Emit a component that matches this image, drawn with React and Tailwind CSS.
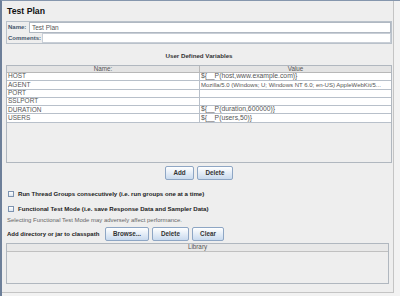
export default function App() {
  const rows = [
    ["HOST", "${__P(host,www.example.com)}"],
    ["AGENT", "Mozilla/5.0 (Windows; U; Windows NT 6.0; en-US) AppleWebKit/5..."],
    ["PORT", ""],
    ["SSLPORT", ""],
    ["DURATION", "${__P(duration,600000)}"],
    ["USERS", "${__P(users,50)}"],
  ];
  const btn =
    "h-[14px] flex items-center justify-center border border-[#8ea6c4] rounded-[2px] bg-gradient-to-b from-[#ffffff] to-[#c9daee] text-[6.3px] font-bold text-[#333]";
  return (
    <div
      className="w-[400px] h-[296px] bg-[#f2f2f2] border-l-2 border-t border-l-[#6d7f99] border-t-[#8596ad] overflow-hidden"
      style={{ fontFamily: '"Liberation Sans", Arial, sans-serif' }}
    >
      <div className="w-[392px] h-[292px] bg-[#eeeeee] border-r border-b border-[#c4c4c4] flex flex-col pl-[4px]">
        <div className="mt-[5px] h-[12px] flex items-center pl-[1px] text-[8.7px] font-bold text-[#111]">
          Test Plan
        </div>
        <div className="mt-[3px] w-[386px] h-[23px] border border-[#b9c1ca] flex flex-col">
          <div className="h-[11px] flex items-center">
            <span className="pl-[1px] w-[22px] text-[6px] font-bold text-[#44556b]">Name:</span>
            <div className="flex-1 h-[11px] bg-white border border-[#b0b8c2] flex items-center pl-[2px] text-[6.5px] text-[#555]">
              Test Plan
            </div>
          </div>
          <div className="h-[11px] flex items-center">
            <span className="pl-[1px] w-[35px] text-[6px] font-bold text-[#44556b] whitespace-nowrap">Comments:</span>
            <div className="flex-1 h-[10px] bg-white border border-[#c8ced6]" />
          </div>
        </div>
        <div className="mt-[8px] h-[8px] w-[386px] flex items-center justify-center text-[6.2px] font-bold text-[#333]">
          User Defined Variables
        </div>
        <div className="mt-[5px] w-[386px] h-[98px] border border-[#b0b7bf] bg-[#eeeeee] flex flex-col">
          <div className="h-[7px] flex bg-[#e4e4e4] border-b border-[#b8b8b8] text-[6.3px] text-[#555] leading-none">
            <div className="w-[193px] border-r border-[#b8b8b8] flex items-center justify-center">Name:</div>
            <div className="flex-1 flex items-center justify-center">Value</div>
          </div>
          {rows.map(([n, v]) => (
            <div key={n} className="h-[8.3px] flex bg-white border-b border-[#b8c0ca] text-[6.5px] text-[#555] leading-none">
              <div className="w-[193px] border-r border-[#b8c0ca] flex items-center pl-[1px]">{n}</div>
              <div
                className={
                  "flex-1 flex items-center pl-[1px] whitespace-nowrap overflow-hidden " +
                  (n === "AGENT" ? "text-[6px]" : "text-[6.8px]")
                }
              >
                {v}
              </div>
            </div>
          ))}
        </div>
        <div className="mt-[3px] w-[386px] flex gap-[3px]">
          <div className={btn + " w-[29px] ml-[159px]"}>Add</div>
          <div className={btn + " w-[36px]"}>Delete</div>
        </div>
        <div className="mt-[10px] h-[8px] flex items-center gap-[4px] pl-[2px]">
          <div className="w-[6px] h-[6px] border border-[#7d93b0] bg-gradient-to-b from-white to-[#dde6f0]" />
          <span className="text-[6.1px] font-bold text-[#222] whitespace-nowrap">
            Run Thread Groups consecutively (i.e. run groups one at a time)
          </span>
        </div>
        <div className="mt-[7px] h-[8px] flex items-center gap-[4px] pl-[2px]">
          <div className="w-[6px] h-[6px] border border-[#7d93b0] bg-gradient-to-b from-white to-[#dde6f0]" />
          <span className="text-[6.1px] font-bold text-[#222] whitespace-nowrap">
            Functional Test Mode (i.e. save Response Data and Sampler Data)
          </span>
        </div>
        <div className="mt-[3px] h-[8px] flex items-center pl-[1px] text-[5.95px] text-[#666] whitespace-nowrap">
          Selecting Functional Test Mode may adversely affect performance.
        </div>
        <div className="mt-[3px] h-[14px] flex items-center pl-[1px]">
          <span className="w-[98px] text-[6px] font-bold text-[#222] whitespace-nowrap">
            Add directory or jar to classpath
          </span>
          <div className={btn + " w-[44px]"}>Browse...</div>
          <div className={btn + " w-[37px] ml-[3px]"}>Delete</div>
          <div className={btn + " w-[32px] ml-[3px]"}>Clear</div>
        </div>
        <div className="mt-[2px] w-[383px] h-[41px] border border-[#b0b7bf] flex flex-col">
          <div className="h-[8px] bg-[#e8e8e8] border-b border-[#c0c0c0] flex items-center justify-center text-[6.3px] text-[#555] leading-none">
            Library
          </div>
        </div>
      </div>
    </div>
  );
}
